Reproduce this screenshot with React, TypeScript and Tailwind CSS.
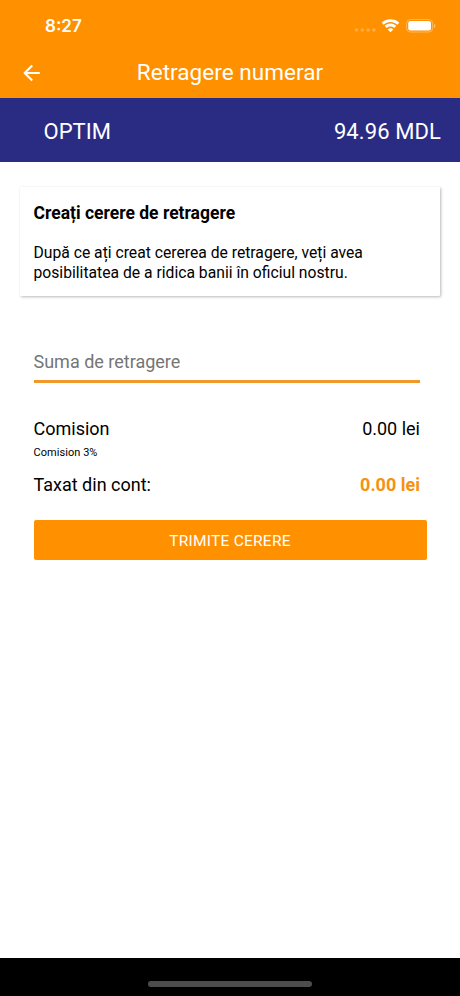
import { useState } from "react";

const BALANCE = "94.96 MDL";

export default function App() {

  const [amount, setAmount] = useState("");

  const total = (Number(amount) || 0).toFixed(2);
  const fee = ((Number(amount) || 0) * 0.03).toFixed(2);

  return (
    <div className="flex h-[996px] w-[460px] flex-col bg-white font-['Roboto',sans-serif] text-black">
      {/* Status bar + header */}
      <div className="h-[98px] bg-[#ff9100] text-white">
        <div className="flex h-[50px] items-center justify-between pt-[2px] pr-[24px] pl-[45px]">
          <span className="pt-[2px] font-['Inter',sans-serif] text-[17px] font-semibold">8:27</span>
          <div className="flex items-center">
            <svg width="22" height="14" viewBox="0 0 22 14" fill="#fff" fillOpacity="0.25" className="mr-[5px]">
              <circle cx="2.500" cy="11" r="1.800" />
              <circle cx="8.300" cy="11" r="1.800" />
              <circle cx="14.100" cy="11" r="1.800" />
              <circle cx="19.900" cy="11" r="1.800" />
            </svg>
            <svg width="19" height="14" viewBox="0 0 19 14" fill="#fff" className="mr-[6px]">
              <path d="M9.500 3c2.500 0 4.800 1 6.500 2.600.2.2.4.2.6 0l1.500-1.500c.2-.2.200-.4 0-.6C15.800 1.300 12.800.2 9.500.2S3.200 1.300.9 3.500c-.2.200-.2.400 0 .600l1.500 1.500c.2.200.4.200.6 0C4.700 4 7 3 9.500 3z" />
              <path d="M9.500 7.400c1.300 0 2.500.5 3.400 1.300.2.200.4.200.6 0l1.500-1.500c.2-.2.200-.4 0-.6-1.500-1.400-3.400-2.200-5.500-2.200s-4 .8-5.500 2.200c-.2.200-.2.400 0 .6l1.500 1.500c.2.200.4.200.6 0 .9-.8 2.100-1.300 3.400-1.300z" />
              <path d="M12.100 10.200c.2.200.2.400 0 .6l-2.300 2.300c-.2.200-.4.200-.6 0l-2.300-2.300c-.2-.2-.2-.4 0-.6.7-.6 1.600-1 2.600-1s1.900.4 2.600 1z" />
            </svg>
            <svg width="30" height="14" viewBox="0 0 30 14" fill="none">
              <rect x="0.600" y="0.500" width="26" height="12.500" rx="3.800" stroke="#fff" strokeOpacity="0.35" />
              <rect x="2.200" y="2" width="22.800" height="9.500" rx="2.300" fill="#fff" />
              <path d="M27.900 4.700v4.300c.9-.4 1.400-1.200 1.400-2.100s-.5-1.800-1.400-2.200z" fill="#fff" fillOpacity="0.45" />
            </svg>
          </div>
        </div>
        <div className="flex h-[46px] items-center">
          <button type="button" aria-label="Înapoi" className="ml-[19px] w-[25px]">
            <svg width="25" height="26" viewBox="0 0 24 24" fill="#fff">
              <path d="M20 11H7.830l5.590-5.590L12 4l-8 8 8 8 1.410-1.410L7.830 13H20v-2z" />
            </svg>
          </button>
          <h1 className="mr-[44px] flex-1 text-center text-[22.500px] tracking-[0.05px]">Retragere numerar</h1>
        </div>
      </div>

      {/* Account */}
      <div className="flex h-[64px] items-center justify-between bg-[#2a2c83] pt-[2px] pr-[19px] pl-[43.500px] text-[22px] text-white">
        <span>OPTIM</span>
        <span className="tracking-[0.1px]">{BALANCE}</span>
      </div>

      <main className="flex-1">
        <section className="mx-[20px] mt-[25px] h-[109px] rounded-[1px] bg-white px-[13.500px] pt-[14px] shadow-[1px_1px_3px_rgba(0,0,0,0.28)]">
          <h2 className="text-[17.500px] leading-[24px] font-bold">Creați cerere de retragere</h2>
          <p className="mt-[18px] text-[15.700px] leading-[20px] whitespace-nowrap">
            După ce ați creat cererea de retragere, veți avea<br />posibilitatea de a ridica banii în oficiul nostru.
          </p>
        </section>

        <form className="pr-[40px] pl-[33.500px]" onSubmit={(e) => e.preventDefault()}>
          <input
            value={amount}
            onChange={(e) => setAmount(e.target.value)}
            placeholder="Suma de retragere"
            inputMode="decimal"
            className="mt-[43px] h-[44px] w-full border-b-[3px] border-[#f0982a] pt-[3px] text-[18px] outline-none placeholder:text-[#757575]"
          />
          <div className="mt-[34px] flex justify-between text-[18px] leading-[24px]">
            <span>Comision</span>
            <span>{fee} lei</span>
          </div>
          <p className="mt-[4px] text-[11px] leading-[16px] tracking-[0.05px]">Comision 3%</p>
          <div className="mt-[12px] flex justify-between text-[18px] leading-[24px]">
            <span>Taxat din cont:</span>
            <span className="font-bold text-[#f5920f]">{total} lei</span>
          </div>
          <button type="submit" className="mt-[23px] h-[40px] w-[393px] rounded-[2px] bg-[#ff9100] pt-[3px] text-[15.500px] tracking-[0.25px] text-white">
            TRIMITE CERERE
          </button>
        </form>
      </main>

      {/* Home indicator */}
      <div className="flex h-[38px] justify-center bg-black pt-[23px]">
        <div className="h-[6px] w-[164px] rounded-full bg-[#4d4d4d]" />
      </div>
    </div>
  );
}
